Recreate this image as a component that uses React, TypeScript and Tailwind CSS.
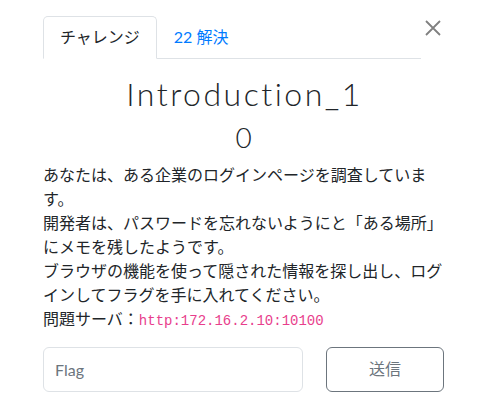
export default function App() {
  return (
    <div
      className="relative w-[485px] h-[411px] bg-white text-[#212529]"
      style={{ fontFamily: 'Lato, "Noto Sans CJK JP", sans-serif' }}
    >
      {/* close */}
      <button className="absolute left-[425px] top-[20px] w-4 h-4 text-[#808080]">
        <svg viewBox="0 0 16 16" className="w-4 h-4" fill="none" stroke="currentColor" strokeWidth={1.8}>
          <path d="M1 1 L15 15 M15 1 L1 15" />
        </svg>
      </button>

      <div className="pl-[43px] pr-[41px] pt-4">
        {/* tabs */}
        <div className="flex w-[378px] border-b border-[#dee2e6]">
          <div className="-mb-px px-4 py-2 text-base leading-6 border border-[#dee2e6] border-b-white rounded-t-[5px] text-[#212529]">
            チャレンジ
          </div>
          <div className="px-4 py-2 text-base leading-6 border border-transparent text-[#007bff]">
            22 解決
          </div>
        </div>

        <h2 className="pt-4 mb-2 pl-[2px] text-center text-[32px] leading-[1.2] font-light tracking-[2.5px]">
          Introduction_1
        </h2>
        <h3 className="mb-2 text-center text-[28px] leading-[1.2] font-light">0</h3>

        <div className="text-base leading-6 mt-0.5">
          <p>あなたは、ある企業のログインページを調査しています。</p>
          <p>開発者は、パスワードを忘れないようにと「ある場所」にメモを残したようです。</p>
          <p>ブラウザの機能を使って隠された情報を探し出し、ログインしてフラグを手に入れてください。</p>
          <p>
            問題サーバ：
            <code
              className="text-[14px] text-[#e83e8c]"
              style={{ fontFamily: '"Liberation Mono", monospace' }}
            >
              http:172.16.2.10:10100
            </code>
          </p>
        </div>

        <div className="mt-[14px] flex items-center">
          <input
            placeholder="Flag"
            className="w-[260px] h-[45px] px-[11px] text-base border border-[#dee2e6] rounded-[6px] placeholder:text-[#6c757d] outline-none"
          />
          <button className="ml-auto w-[118px] h-[45px] text-base text-[#6c757d] border border-[#6c757d] rounded-[6px]">
            送信
          </button>
        </div>
      </div>
    </div>
  );
}
